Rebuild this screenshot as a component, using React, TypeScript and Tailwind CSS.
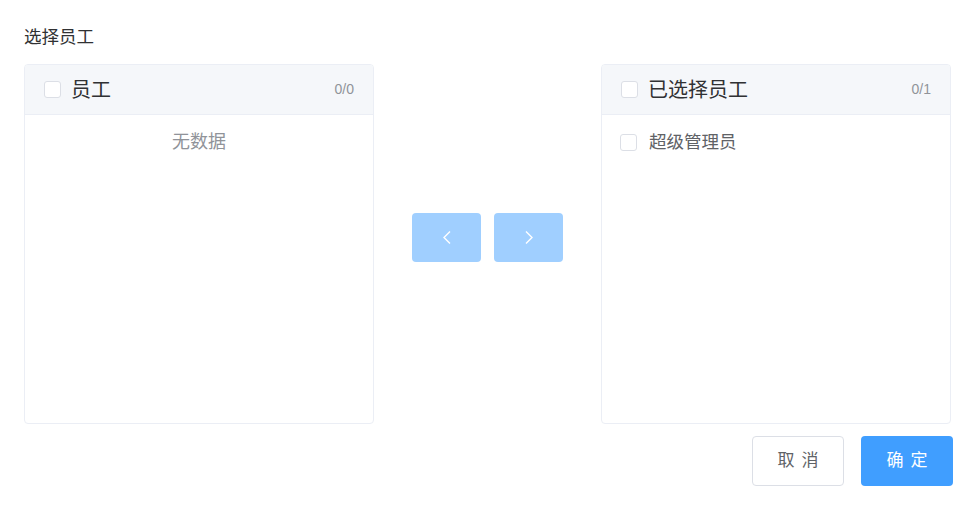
const font = "font-['Liberation_Sans','Noto_Sans_CJK_SC',sans-serif]"

function Checkbox() {
  return (
    <span className="inline-block w-[17px] h-[17px] rounded-[3px] border border-[#dcdfe6] bg-white shrink-0" />
  )
}

function Panel({
  title,
  count,
  items,
}: {
  title: string
  count: string
  items: string[]
}) {
  return (
    <div className="w-[350px] h-[360px] border border-[#ebeef5] rounded-[4px] bg-white overflow-hidden flex flex-col">
      <div className="h-[50px] bg-[#f5f7fa] border-b border-[#ebeef5] flex items-center pl-[19px] pr-[19px]">
        <Checkbox />
        <span className="ml-[10px] text-[20px] text-[#303133] leading-none">
          {title}
        </span>
        <span className="ml-auto text-[14px] text-[#909399]">{count}</span>
      </div>
      <div className="pt-[9px]">
        {items.length === 0 ? (
          <p className="h-[36px] leading-[36px] text-center text-[18px] text-[#909399]">
            无数据
          </p>
        ) : (
          items.map((item) => (
            <div key={item} className="h-[36px] flex items-center pl-[18px]">
              <Checkbox />
              <span className="ml-[12px] text-[17.5px] text-[#606266]">
                {item}
              </span>
            </div>
          ))
        )}
      </div>
    </div>
  )
}

function Chevron({ dir }: { dir: "left" | "right" }) {
  return (
    <svg width="10" height="15" viewBox="0 0 10 15" fill="none">
      <path
        d={dir === "left" ? "M8 1.5 2 7.5l6 6" : "M2 1.5l6 6-6 6"}
        stroke="white"
        strokeWidth="1.4"
      />
    </svg>
  )
}

export default function App() {
  return (
    <div className={`${font} w-[975px] h-[509px] bg-white pt-[25px] pl-[24px]`}>
      <div className="text-[17.5px] leading-[24px] text-[#303133]">选择员工</div>

      <div className="flex mt-[15px]">
        <Panel title="员工" count="0/0" items={[]} />

        <div className="w-[227px] flex justify-center gap-[13px] pt-[149px]">
          <button
            type="button"
            className="w-[69px] h-[49px] rounded-[4px] bg-[#a0cfff] flex items-center justify-center"
          >
            <Chevron dir="left" />
          </button>
          <button
            type="button"
            className="w-[69px] h-[49px] rounded-[4px] bg-[#a0cfff] flex items-center justify-center"
          >
            <Chevron dir="right" />
          </button>
        </div>

        <Panel title="已选择员工" count="0/1" items={["超级管理员"]} />
      </div>

      <div className="flex justify-end gap-[17px] mt-[12px] pr-[22px]">
        <button
          type="button"
          className="w-[92px] h-[50px] rounded-[4px] border border-[#dcdfe6] bg-white text-[17px] text-[#606266]"
        >
          <span className="tracking-[7px] mr-[-7px]">取消</span>
        </button>
        <button
          type="button"
          className="w-[92px] h-[50px] rounded-[4px] bg-[#409eff] text-[17px] text-white"
        >
          <span className="tracking-[7px] mr-[-7px]">确定</span>
        </button>
      </div>
    </div>
  )
}
